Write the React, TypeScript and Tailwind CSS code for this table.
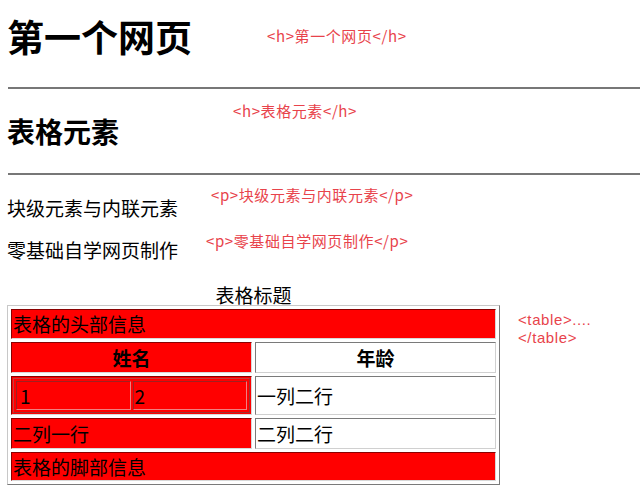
import React from "react";

export default function App() {
  return (
    <div className="relative w-[640px] h-[492px] overflow-hidden bg-white text-black font-['Noto_Sans_CJK_SC',_'Noto_Sans',_sans-serif]">
      <div className="pl-2">
        <div className="h-[87px] pt-[16px]">
          <h1 className="text-[37px] leading-[40px] font-bold -ml-[1px]">第一个网页</h1>
        </div>
        <div className="h-[2px] bg-[#777]" />
        <div className="h-[84px] pt-[26px]">
          <h2 className="text-[28px] leading-[32px] font-bold -ml-[1px]">表格元素</h2>
        </div>
        <div className="h-[2px] bg-[#777]" />
        <p className="mt-[21px] text-[19px] leading-[24px] -ml-[1px]">块级元素与内联元素</p>
        <p className="mt-[18px] text-[19px] leading-[24px] -ml-[1px]">零基础自学网页制作</p>
      </div>

      <div className="ml-[7px] w-[493px] mt-[21px]">
        <div className="text-center text-[19px] leading-[24px] h-[22px]">表格标题</div>
        <table className="w-full border-separate border-spacing-[3px] border border-t-[#c8c8c8] border-l-[#c8c8c8] border-r-[#7a7a7a] border-b-[#7a7a7a] text-[19px] leading-[24px]">
          <tbody>
            <tr>
              <td
                colSpan={2}
                className="h-[30px] bg-[#ff0000] border border-t-[#8a0000] border-l-[#8a0000] border-r-[#d8d8d8] border-b-[#d8d8d8] px-[1px] align-middle"
              >
                表格的头部信息
              </td>
            </tr>
            <tr>
              <th className="w-[241px] h-[31px] bg-[#ff0000] border border-t-[#8a0000] border-l-[#8a0000] border-r-[#d8d8d8] border-b-[#d8d8d8] font-bold text-center align-middle">
                姓名
              </th>
              <th className="w-[241px] h-[31px] bg-white border border-t-[#7a7a7a] border-l-[#7a7a7a] border-r-[#d0d0d0] border-b-[#d0d0d0] font-bold text-center align-middle">
                年龄
              </th>
            </tr>
            <tr>
              <td className="h-[38px] bg-[#ff0000] border border-t-[#8a0000] border-l-[#8a0000] border-r-[#d8d8d8] border-b-[#d8d8d8] p-[1px] align-middle">
                <table className="w-full border-separate border-spacing-[2px] border border-t-[#c04040] border-l-[#c04040] border-r-[#a03030] border-b-[#a03030]">
                  <tbody>
                    <tr>
                      <td className="h-[29px] w-1/2 bg-[#ff0000] border border-t-[#a02020] border-l-[#a02020] border-r-[#f08080] border-b-[#f08080] pl-[3px] align-middle">
                        1
                      </td>
                      <td className="h-[29px] w-1/2 bg-[#ff0000] border border-t-[#a02020] border-l-[#a02020] border-r-[#f08080] border-b-[#f08080] pl-[1px] align-middle">
                        2
                      </td>
                    </tr>
                  </tbody>
                </table>
              </td>
              <td className="h-[38px] bg-white border border-t-[#7a7a7a] border-l-[#7a7a7a] border-r-[#d0d0d0] border-b-[#d0d0d0] px-[1px] align-middle">
                一列二行
              </td>
            </tr>
            <tr>
              <td className="h-[31px] bg-[#ff0000] border border-t-[#8a0000] border-l-[#8a0000] border-r-[#d8d8d8] border-b-[#d8d8d8] px-[1px] align-middle">
                二列一行
              </td>
              <td className="h-[31px] bg-white border border-t-[#7a7a7a] border-l-[#7a7a7a] border-r-[#d0d0d0] border-b-[#d0d0d0] px-[1px] align-middle">
                二列二行
              </td>
            </tr>
            <tr>
              <td
                colSpan={2}
                className="h-[29px] bg-[#ff0000] border border-t-[#8a0000] border-l-[#8a0000] border-r-[#d8d8d8] border-b-[#d8d8d8] px-[1px] align-middle"
              >
                表格的脚部信息
              </td>
            </tr>
          </tbody>
        </table>
      </div>

      <div className="absolute left-[267px] top-[26px] text-[15px] leading-[20px] tracking-[0.6px] text-[#e8434b] whitespace-nowrap">
        &lt;h&gt;第一个网页&lt;/h&gt;
      </div>
      <div className="absolute left-[233px] top-[101px] text-[15px] leading-[20px] tracking-[0.6px] text-[#e8434b] whitespace-nowrap">
        &lt;h&gt;表格元素&lt;/h&gt;
      </div>
      <div className="absolute left-[211px] top-[185px] text-[15px] leading-[20px] tracking-[0.6px] text-[#e8434b] whitespace-nowrap">
        &lt;p&gt;块级元素与内联元素&lt;/p&gt;
      </div>
      <div className="absolute left-[206px] top-[231px] text-[15px] leading-[20px] tracking-[0.6px] text-[#e8434b] whitespace-nowrap">
        &lt;p&gt;零基础自学网页制作&lt;/p&gt;
      </div>
      <div className="absolute left-[518px] top-[311px] flex flex-col font-['Liberation_Sans',_sans-serif] text-[15px] leading-[18px] tracking-[0.6px] text-[#e8434b] whitespace-nowrap">
        <span>&lt;table&gt;....</span>
        <span>&lt;/table&gt;</span>
      </div>
    </div>
  );
}
